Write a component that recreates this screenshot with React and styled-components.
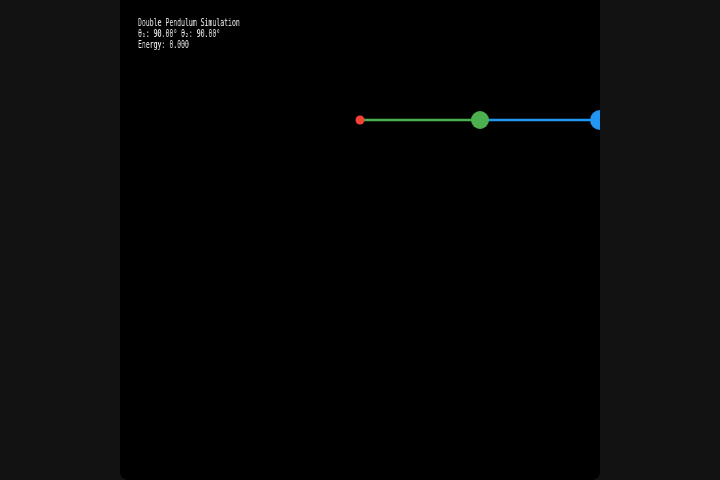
import React from 'react'
import styled, { createGlobalStyle } from 'styled-components'

const Global = createGlobalStyle`
  html, body { margin: 0; padding: 0; background: #121212; overflow: hidden; }
`

const Page = styled.div`
  width: 720px;
  height: 480px;
  display: flex;
  justify-content: center;
`

const Stage = styled.div`
  position: relative;
  width: 480px;
  height: 480px;
  background: #000;
  border-radius: 0 0 8px 8px;
  overflow: hidden;
`

const Readout = styled.div`
  position: absolute;
  left: 18px;
  top: 17px;
  color: #f2f2f2;
  font-family: "DejaVu Sans Mono", "Liberation Mono", monospace;
  font-size: 10px;
  line-height: 11px;
  white-space: nowrap;
  transform: scaleX(0.65);
  transform-origin: left top;
  will-change: transform;
`

const Canvas = styled.svg`
  display: block;
`

const pivot = { x: 240, y: 120 }
const bob1 = { x: 360, y: 120 }
const bob2 = { x: 480, y: 120 }

export default function App() {
  return (
    <>
      <Global />
      <Page>
        <Stage>
          <Canvas width="480" height="480">
            <line x1={pivot.x} y1={pivot.y} x2={bob1.x} y2={bob1.y} stroke="#4caf50" strokeWidth="2.5" />
            <line x1={bob1.x} y1={bob1.y} x2={bob2.x} y2={bob2.y} stroke="#2196f3" strokeWidth="2.5" />
            <circle cx={pivot.x} cy={pivot.y} r="4.5" fill="#f44336" />
            <circle cx={bob1.x} cy={bob1.y} r="9" fill="#4caf50" />
            <circle cx={bob2.x} cy={bob2.y} r="10" fill="#2196f3" />
          </Canvas>
          <Readout>
            <div>Double Pendulum Simulation</div>
            <div>θ₁: 90.00° θ₂: 90.00°</div>
            <div>Energy: 0.000</div>
          </Readout>
        </Stage>
      </Page>
    </>
  )
}
